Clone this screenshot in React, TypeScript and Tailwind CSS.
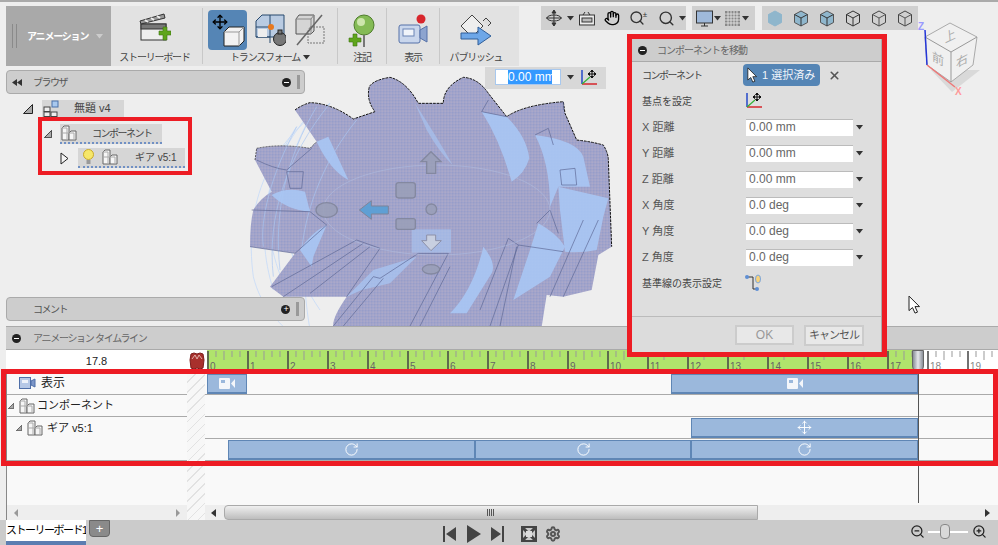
import { Hand, Settings, X, ZoomIn, ZoomOut, Search, Move, RotateCw } from 'lucide-react'

const Caret = ({ className = '' }: { className?: string }) => (
    <svg width="7" height="5" viewBox="0 0 7 5" className={className}><path d="M0 0h7L3.500 4.500z" fill="#333" /></svg>
)

const Tri = ({ size = 10 }: { size?: number }) => (
    <svg width={size} height={size} viewBox="0 0 10 10"><path d="M9.500 0.500V9.500H0.500z" fill="#aaa" stroke="#222" /></svg>
)

const Arrow = ({ className = '', size = 13 }: { className?: string; size?: number }) => (
    <svg width={size} height={size * 1.600} viewBox="0 0 12 19" className={className}>
        <path d="M1 1v14.500l3.500-3 2.500 5.500 2.500-1-2.500-5.500H11.500z" fill="#fff" stroke="#222" strokeWidth="1" />
    </svg>
)

const CompIcon = ({ size = 18 }: { size?: number }) => (
    <svg width={size} height={size} viewBox="0 0 18 18">
        <path d="M2 16V4l2-2h5v14z" fill="#f6f6f6" stroke="#666" />
        <path d="M9 16V9l2-2h5v9z" fill="#f6f6f6" stroke="#666" />
        <path d="M2 9h7M2 4h5v12M9 9h5v7" fill="none" stroke="#aaa" />
    </svg>
)

const AxisIcon = () => (
    <svg width="18" height="18" viewBox="0 0 18 18">
        <path d="M2 1v14" stroke="#2449c9" strokeWidth="1.500" />
        <path d="M2 15h15" stroke="#d6262c" strokeWidth="1.500" />
        <path d="M2 15l8-7" stroke="#35b035" strokeWidth="1.200" />
        <path d="M12 1v8M8 5h8M12 1l-1.500 1.500h3zM12 9l-1.500-1.500h3zM8 5l1.500-1.500v3zM16 5l-1.500-1.500v3z" stroke="#111" fill="#111" />
    </svg>
)

const Cube = ({ fill, top, side }: { fill: string; top: string; side: string }) => (
    <svg width="16" height="17" viewBox="0 0 16 17">
        <path d="M8 1l6.500 3.500v8L8 16l-6.500-3.500v-8z" fill={fill} stroke={side} />
        <path d="M1.500 4.500L8 8l6.500-3.500M8 8v8" fill="none" stroke={top} />
    </svg>
)

const Clapper = () => (
    <svg width="32" height="30" viewBox="0 0 32 30">
        <rect x="2" y="11" width="25" height="16" fill="#eee" stroke="#333" />
        <rect x="2" y="11" width="25" height="5" fill="#777" stroke="#333" />
        <path d="M1 8L25 1l1 4L2 11z" fill="#999" stroke="#333" />
        <path d="M6 7l3 2M12 5l3 2M18 3l3 2" stroke="#eee" strokeWidth="2" />
        <path d="M20 18h4v-4h4v4h4v4h-4v5h-4v-5h-4z" fill="#5fa51c" stroke="#3c7410" strokeWidth="0.600" />
    </svg>
)

const MoveTool = () => (
    <div className="w-[39px] h-[40px] bg-[#5585b5] rounded-sm relative">
        <Move size={16} strokeWidth={2} className="absolute left-[4px] top-[4px] text-black" />
        <svg width="22" height="22" viewBox="0 0 22 22" className="absolute left-[15px] top-[15px]">
            <path d="M1 7l5-5h15v14l-5 5H1z" fill="#f2f2f2" stroke="#222" />
            <path d="M1 7h15v14M16 7l5-5" fill="none" stroke="#999" />
        </svg>
    </div>
)

const AlignTool = () => (
    <svg width="31" height="34" viewBox="0 0 31 34">
        <path d="M1 8l6-6h22v22H1z" fill="#b9cbe2" stroke="#27496d" />
        <path d="M1 14h14V2M15 14v16M1 24h14" fill="none" stroke="#27496d" />
        <rect x="3" y="16" width="9" height="8" fill="#eee" />
        <circle cx="16" cy="14" r="3" fill="#e8791f" />
        <circle cx="25" cy="26" r="6.500" fill="#777" stroke="#222" />
        <rect x="23" y="17" width="4" height="4" fill="#777" stroke="#222" />
    </svg>
)

const SplitTool = () => (
    <svg width="32" height="34" viewBox="0 0 32 34">
        <path d="M2 6l3-4h15v16l-3 3H2z" fill="#d5d5d5" stroke="#555" />
        <path d="M2 6h15v15M17 6l3-4" fill="none" stroke="#888" />
        <path d="M16 14h14v16H14V18z" fill="none" stroke="#777" strokeDasharray="2 1" />
        <path d="M3 32L28 2" stroke="#666" strokeWidth="1.500" />
    </svg>
)

const NoteTool = () => (
    <svg width="32" height="36" viewBox="0 0 32 36">
        <circle cx="18" cy="11" r="10" fill="#84bb55" stroke="#4f7d2c" />
        <circle cx="15" cy="8" r="4" fill="#cde6ac" />
        <path d="M18 21v12" stroke="#777" strokeWidth="2" />
        <path d="M3 24h4v-4h4v4h4v4h-4v4H7v-4H3z" fill="#5fa51c" stroke="#3c7410" strokeWidth="0.600" />
    </svg>
)

const CamTool = () => (
    <svg width="32" height="34" viewBox="0 0 32 34">
        <rect x="2" y="11" width="21" height="18" rx="2" fill="#c9d6ec" stroke="#5571a8" />
        <rect x="6" y="15" width="11" height="7" fill="#f0f4fa" stroke="#6b84b5" />
        <path d="M23 16l7-4v16l-7-4z" fill="#8da4cf" stroke="#5571a8" />
        <circle cx="24" cy="5" r="4.500" fill="#d8262c" />
    </svg>
)

const PublishTool = () => (
    <svg width="34" height="34" viewBox="0 0 34 34">
        <path d="M13 1l11 11-11 11L2 12z" fill="#eee" stroke="#444" />
        <path d="M24 7l3-3 5 5-3 3" fill="#ddd" stroke="#444" />
        <path d="M2 19h17v-6l13 9-13 9v-6H2z" fill="#6ea7e8" stroke="#315f99" />
    </svg>
)

const GEAR_TOP = 'M195 120Q215 105 240 98Q305 100 370 147L435 125Q408 90 418 50Q430 30 480 22Q530 35 565 100L640 100Q640 50 700 22Q745 25 775 70L830 140Q880 105 1000 95L1005 130L1040 210Q1085 215 1120 225Q1135 250 1135 270L1145 530'

const Gear = () => (
    <svg width="400" height="260" viewBox="0 0 1200 780" className="absolute left-[230px] top-[70px]">
        <defs>
            <pattern id="mesh" width="9" height="9" patternUnits="userSpaceOnUse">
                <rect width="9" height="9" fill="#a0a3cb" />
                <rect width="4" height="4" fill="#989dc8" />
                <rect x="4" y="4" width="5" height="5" fill="#aba8c9" />
            </pattern>
        </defs>
        <g fill="none" stroke="#c6dbf8" strokeWidth="2.500">
            <path d="M300 100C120 210 40 400 70 620C90 700 130 740 170 780" />
            <path d="M240 130C110 280 70 470 130 660" />
            <path d="M200 170C90 330 90 520 190 700" />
            <path d="M260 110C140 300 120 500 270 720" />
            <path d="M380 150C250 300 190 480 240 780" />
        </g>
        <path d={`${GEAR_TOP}L1105 555L1085 660L1000 680L950 675L935 770L310 770Q305 745 350 680L160 680L120 650L195 550L60 530Q60 460 70 420Q90 385 125 365L75 270L80 235Q150 220 240 235L260 215Z`} fill="url(#mesh)" />
        <path d={GEAR_TOP} fill="none" stroke="#111" strokeWidth="3" strokeDasharray="8 3" />
        <path d="M80 235Q150 220 240 235L260 215M75 270L80 235" fill="none" stroke="#222" strokeWidth="2" strokeDasharray="6 3" />
        <g fill="none" stroke="#a9c6f2" strokeWidth="2.500" opacity="0.8">
            <path d="M300 100C170 260 110 440 130 620" />
            <path d="M260 110C170 260 130 430 150 600" />
            <path d="M380 150C290 260 230 400 215 540" />
            <path d="M200 170C120 320 90 450 100 530" />
        </g>
        <g fill="#a8c6f4" fillOpacity="0.9">
            <path d="M555 100Q620 200 668 285Q630 250 590 180z" opacity="0.7" />
            <path d="M755 125L830 140Q890 200 898 265Q885 310 845 335Q810 210 755 125z" />
            <path d="M915 195Q1040 210 1060 260L1080 350L985 350L960 410Q960 280 915 195z" />
            <path d="M985 350L1135 385L1120 440L1100 540Q1050 550 1005 545L990 420z" />
            <path d="M260 215L295 200L355 330Q300 300 260 215z" />
            <path d="M125 375Q170 350 225 365L240 425Q170 420 125 375z" />
            <path d="M210 540Q240 490 290 465L250 560L245 590z" />
            <path d="M900 540L925 460Q980 490 1005 530L960 620L850 690z" />
            <path d="M350 680L430 600L560 560L480 640L395 660z" opacity="0.8" />
            <path d="M660 730Q730 660 760 530Q800 580 785 610L710 730z" />
        </g>
        <g fill="none" stroke="#5c6694" strokeWidth="2">
            <path d="M80 270Q130 295 170 300L245 235M170 305L220 305L215 355L180 355z" />
            <path d="M915 195L955 175L970 225M1000 120L1000 95M830 140L755 125L775 90" />
            <path d="M60 530L195 550L290 465L240 425L65 420" />
            <path d="M125 650L380 510L450 535L350 680M160 680L400 520M240 670L420 530" />
            <path d="M310 768L430 620L450 625L565 550L655 550L540 768M340 768L460 625M570 768L660 590" />
            <path d="M750 720L835 505L865 525L780 768M810 768L860 530M920 460L960 420L985 490M865 525L1000 545" />
            <path d="M990 300L1035 295L1040 345L995 345z" />
            <path d="M1000 680L1105 450M960 680L1060 450" />
        </g>
        <ellipse cx="620" cy="420" rx="340" ry="135" fill="none" stroke="#b4c2e6" strokeWidth="2" opacity="0.7" />
        <rect x="545" y="478" width="118" height="70" fill="#a8c6f4" opacity="0.6" />
        <g fill="#9a9fb8" stroke="#7f8499" strokeWidth="4" opacity="0.85">
            <path d="M603 245L633 275H617V310H590V275H573z" />
            <rect x="498" y="338" width="58" height="46" rx="8" />
            <rect x="498" y="446" width="58" height="32" rx="6" />
            <circle cx="604" cy="418" r="16" />
            <ellipse cx="290" cy="420" rx="32" ry="22" />
            <ellipse cx="603" cy="598" rx="26" ry="14" />
        </g>
        <path d="M603 542L575 512H590V495H617V512H634z" fill="#c8cfe0" stroke="#8c90a8" strokeWidth="3" />
        <path d="M388 420L424 392V408H475V432H424V448z" fill="#5f9fd4" stroke="#7f8499" strokeWidth="3" />
    </svg>
)

const ViewCube = () => (
    <svg width="72" height="80" viewBox="918 18 72 80" className="absolute left-[918px] top-[18px]">
        <path d="M931 70L952 92L980 70z" fill="#ccc" opacity="0.6" />
        <path d="M925 37L950 23L977 37L973 65L951 82L927 65z" fill="#f0f0f0" stroke="#aaa" />
        <path d="M925 37L951 52L977 37M951 52V82" fill="none" stroke="#999" />
        <text transform="translate(945 43) rotate(-25) skewX(-20)" fontSize="12" fill="#aaa" fontFamily="Noto Sans CJK JP, sans-serif">上</text>
        <text transform="translate(932 60) skewY(28)" fontSize="12" fill="#aaa" fontFamily="Noto Sans CJK JP, sans-serif">前</text>
        <text transform="translate(956 68) skewY(-28)" fontSize="12" fill="#aaa" fontFamily="Noto Sans CJK JP, sans-serif">右</text>
        <path d="M925 30L927 65" stroke="#2436d8" strokeWidth="1.500" />
        <path d="M927 65L955 87" stroke="#e77" strokeWidth="1.500" />
        <text x="918" y="30" fontSize="10" fontWeight="700" fill="#99f" fontFamily="Liberation Sans, sans-serif">Z</text>
        <text x="955" y="95" fontSize="10" fontWeight="700" fill="#f99" fontFamily="Liberation Sans, sans-serif">X</text>
    </svg>
)

const Ruler = () => {
    const ticks = []
    for (let x = 1; x < 791; x += 8) ticks.push(x)
    return (
        <svg width="791" height="22" viewBox="0 0 791 22" className="block">
            <rect width="791" height="22" fill="#fff" />
            <rect width="711" height="22" fill="#b0e46c" />
            {ticks.map((x, i) => (
                <line key={x} x1={x} x2={x} y1="1" y2={i % 5 === 0 ? 21 : i % 5 === 2 ? 10 : 7} stroke={i % 5 === 0 ? '#444' : '#999'} strokeWidth={i % 5 === 0 ? 1.500 : 1} />
            ))}
            {Array.from({ length: 20 }, (_, i) => (
                <text key={i} x={1 + i * 40 + 2} y="20" fontSize="10" fill={i > 17 ? '#888' : '#666'} fontFamily="Liberation Sans, sans-serif">{i}</text>
            ))}
        </svg>
    )
}

const Bar = ({ ml, w, children }: { ml: string; w: string; children?: React.ReactNode }) => (
    <div className={`${ml} ${w} h-[20px] bg-[#9bb8dc] border border-[#5f86b5] border-b-2 flex items-center justify-center`}>{children}</div>
)

const CamMini = () => (
    <svg width="16" height="11" viewBox="0 0 16 11"><rect width="11" height="11" rx="1" fill="#f4f6fa" /><rect x="2" y="2" width="4" height="3" fill="#9bb8dc" /><path d="M12 5.500L16 1V10z" fill="#f4f6fa" /></svg>
)

const Field = ({ label, value }: { label: string; value: string }) => (
    <div className="h-[26px] flex items-center">
        <span className="w-[104px] text-[11px] text-[#555]">{label}</span>
        <div className="w-[107px] h-[17px] bg-white border-t border-[#bbb] pl-[3px] text-[12px] leading-[15px] text-[#666]">{value}</div>
        <Caret className="ml-[3px]" />
    </div>
)

const BUTTONS = [
    { label: '注記', w: 'w-[49px]', icon: <NoteTool /> },
    { label: '表示', w: 'w-[53px]', icon: <CamTool /> },
    { label: 'パブリッシュ', w: 'w-[72px]', icon: <PublishTool /> },
]

function App() {
    return (
        <div className="relative w-[998px] h-[545px] overflow-hidden flex flex-col bg-[#eeeeee] [font-family:'Liberation_Sans','Noto_Sans_CJK_JP',sans-serif]">
            <div className="relative h-[326px] flex flex-col pt-[6px] pl-[6px]">
                <div className="absolute left-0 top-0 w-full h-[2px] bg-[#aaaaaa]" />
                <Gear />
                <ViewCube />

                {/* ribbon */}
                <div className="relative w-[513px] h-[60px] flex bg-[#e2e2e2] text-[10px] text-[#444] tracking-[-1.200px]">
                    <div className="w-[105px] h-full bg-[#a9a9a9] flex items-center pl-[6px]">
                        <div className="w-[5px] h-[24px] border-x border-[#8a8a8a]" />
                        <span className="ml-[10px] text-white font-bold">アニメーション</span>
                        <Caret className="ml-[8px] invert" />
                    </div>
                    <div className="w-[92px] flex flex-col items-center border-r border-[#c8c8c8] my-[2px] pt-[5px] pr-[4px]">
                        <Clapper />
                        <span className="mt-auto -mb-[1px] whitespace-nowrap">ストーリーボード</span>
                    </div>
                    <div className="w-[135px] flex flex-col border-r border-[#c8c8c8] my-[2px] px-[5px] pt-[2px]">
                        <div className="flex items-center gap-[8px]">
                            <MoveTool />
                            <AlignTool />
                            <SplitTool />
                        </div>
                        <div className="mt-auto -mb-[1px] flex items-center justify-center gap-[3px]">
                            <span>トランスフォーム</span>
                            <Caret />
                        </div>
                    </div>
                    {BUTTONS.map((b) => (
                        <div key={b.label} className={`${b.w} flex flex-col items-center border-r border-[#c8c8c8] last:border-r-0 my-[2px] pt-[6px]`}>
                            {b.icon}
                            <span className="mt-auto -mb-[1px] whitespace-nowrap">{b.label}</span>
                        </div>
                    ))}
                </div>

                {/* browser */}
                <div className="relative mt-[4px] w-[299px] h-[24px] flex items-center bg-[#cdcdcd] border border-[#aaaaaa] rounded-sm px-[4px] text-[10px] text-[#555] tracking-[-1.500px]">
                    <svg width="10" height="7" viewBox="0 0 10 7" className="ml-[1px]"><path d="M5 0v7L0 3.500zM10 0v7L5 3.500z" fill="#333" /></svg>
                    <span className="ml-[11px]">ブラウザ</span>
                    <div className="ml-auto w-[9px] h-[9px] rounded-full bg-[#222] flex items-center justify-center">
                        <div className="w-[5px] h-[1px] bg-white" />
                    </div>
                    <div className="ml-[6px] w-[3px] h-[14px] bg-[#999]" />
                </div>
                <div className="relative mt-[6px] flex flex-col text-[11px] text-[#444]">
                    <div className="h-[17px] ml-[17px] flex items-center">
                        <Tri />
                        <div className="ml-[9px] w-[82px] h-[17px] bg-[#d6d6d6] flex items-center">
                            <svg width="18" height="17" viewBox="0 0 18 17">
                                <rect x="2" y="7" width="6" height="4.500" fill="#eee" stroke="#444" />
                                <rect x="2" y="12" width="6" height="4.500" fill="#eee" stroke="#444" />
                                <rect x="9" y="12" width="6" height="4.500" fill="#eee" stroke="#444" />
                                <rect x="10" y="1" width="6" height="6" fill="#a8c8ee" stroke="#4a70a8" />
                            </svg>
                            <span className="ml-[14px]">無題 v4</span>
                        </div>
                    </div>
                    <div className="mt-[7px] h-[20px] ml-[38px] flex items-center">
                        <Tri size={8} />
                        <div className="ml-[8px] w-[102px] h-[20px] bg-[#d6d6d6] flex items-center border-b-2 border-dotted border-[#7090c4]">
                            <CompIcon />
                            <span className="ml-[14px] text-[10px] tracking-[-1.500px]">コンポーネント</span>
                        </div>
                    </div>
                    <div className="mt-[4px] h-[20px] ml-[54px] flex items-center">
                        <svg width="9" height="13" viewBox="0 0 9 13"><path d="M1 1L8 6.500L1 12z" fill="#f4f4f4" stroke="#222" /></svg>
                        <div className="ml-[9px] w-[107px] h-[20px] bg-[#d6d6d6] flex items-center border-b-2 border-dotted border-[#7090c4]">
                            <svg width="11" height="16" viewBox="0 0 11 16" className="ml-[5px]">
                                <circle cx="5.500" cy="5.500" r="5" fill="#f6e76a" stroke="#c8a92a" />
                                <rect x="3.500" y="11" width="4" height="4" fill="#999" />
                            </svg>
                            <div className="ml-[7px]"><CompIcon /></div>
                            <span className="ml-[16px] text-[10px]">ギア v5:1</span>
                        </div>
                    </div>
                </div>

                {/* comments */}
                <div className="relative mt-auto mb-[5px] w-[299px] h-[24px] flex items-center bg-[#cdcdcd] border border-[#aaaaaa] rounded-sm pl-[26px] pr-[5px] text-[10px] text-[#555] tracking-[-1.500px]">
                    <span>コメント</span>
                    <div className="ml-auto w-[9px] h-[9px] rounded-full bg-[#222] flex items-center justify-center text-[9px] leading-none text-white">+</div>
                    <div className="ml-[6px] w-[3px] h-[14px] bg-[#999]" />
                </div>
            </div>

            {/* timeline */}
            <div className="relative h-[24px] ml-[6px] flex items-center bg-[#cdcdcd] border-y border-[#aaaaaa] pl-[6px] text-[10px] text-[#666] tracking-[-1.300px]">
                <div className="w-[9px] h-[9px] rounded-full bg-[#222] flex items-center justify-center">
                    <div className="w-[5px] h-[1px] bg-white" />
                </div>
                <span className="ml-[12px]">アニメーション タイムライン</span>
            </div>
            <div className="ml-[6px] h-[22px] flex bg-white">
                <div className="w-[181px] flex items-center justify-center text-[11px] text-[#222]">17.8</div>
                <div className="w-[20px] flex items-center justify-center">
                    <svg width="16" height="18" viewBox="0 0 16 18">
                        <path d="M2 2l3-1 3 1 3-1 3 1 1 6-1 8-3 1-3-1-3 1-3-1-1-8z" fill="#a8302c" stroke="#7c1d1a" />
                        <path d="M3 7l3-4 2 4 2-4 3 4" fill="none" stroke="#e0b0a8" />
                    </svg>
                </div>
                <Ruler />
            </div>
            <div className="h-[148px] ml-[6px] flex bg-[#f9f9f9] border-l border-[#888888]">
                <div className="w-[180px] flex flex-col text-[11px] text-[#222]">
                    <div className="h-[23px] flex items-center pl-[12px] border-b border-[#aaaaaa]">
                        <svg width="17" height="12" viewBox="0 0 17 12">
                            <rect x="0.500" y="0.500" width="11" height="11" fill="#b6c8e6" stroke="#4f6fa8" />
                            <rect x="3" y="3" width="6" height="3" fill="#eef2f9" />
                            <path d="M12 4l4-2v8l-4-2z" fill="#7c96c8" stroke="#4f6fa8" />
                        </svg>
                        <span className="ml-[5px] text-[12px]">表示</span>
                    </div>
                    <div className="h-[22px] flex items-center pl-[1px] border-b border-[#aaaaaa]">
                        <Tri size={6} />
                        <div className="ml-[4px]"><CompIcon /></div>
                        <span className="ml-[1px]">コンポーネント</span>
                    </div>
                    <div className="h-[44px] pt-[2px] pl-[9px] flex items-start border-b border-[#aaaaaa]">
                        <div className="mt-[6px]"><Tri size={6} /></div>
                        <div className="ml-[4px]"><CompIcon /></div>
                        <span className="ml-[3px] mt-[1px]">ギア v5:1</span>
                    </div>
                    <div className="mt-auto h-[15px] px-[7px] flex items-center justify-between bg-[#eeeeee]">
                        <svg width="4" height="8" viewBox="0 0 4 8"><path d="M4 0v8L0 4z" fill="#999" /></svg>
                        <svg width="4" height="8" viewBox="0 0 4 8"><path d="M0 0v8l4-4z" fill="#999" /></svg>
                    </div>
                </div>
                <div className="w-[18px] bg-[repeating-linear-gradient(135deg,#e2e2e2_0,#e2e2e2_1px,#f7f7f7_1px,#f7f7f7_7px)]" />
                <div className="relative flex-1 flex flex-col">
                    <div className="h-[23px] pt-[2px] flex border-b border-[#aaaaaa]">
                        <Bar ml="ml-[2px]" w="w-[40px]"><CamMini /></Bar>
                        <Bar ml="ml-[424px]" w="w-[247px]"><CamMini /></Bar>
                    </div>
                    <div className="h-[22px] border-b border-[#aaaaaa]" />
                    <div className="h-[22px] pt-[1px] flex border-b border-[#aaaaaa]">
                        <Bar ml="ml-[486px]" w="w-[227px]"><Move size={15} strokeWidth={1.500} className="text-white" /></Bar>
                    </div>
                    <div className="h-[22px] pt-[1px] flex border-b border-[#aaaaaa]">
                        <Bar ml="ml-[23px]" w="w-[247px]"><RotateCw size={15} strokeWidth={1.500} className="text-white" /></Bar>
                        <Bar ml="ml-0" w="w-[216px]"><RotateCw size={15} strokeWidth={1.500} className="text-white" /></Bar>
                        <Bar ml="ml-0" w="w-[227px]"><RotateCw size={15} strokeWidth={1.500} className="text-white" /></Bar>
                    </div>
                    <div className="absolute left-[713px] top-0 w-px h-[131px] bg-[#555]" />
                    <div className="mt-auto h-[15px] flex items-center bg-[#eeeeee]">
                        <svg width="5" height="8" viewBox="0 0 5 8" className="ml-[6px]"><path d="M5 0v8L0 4z" fill="#333" /></svg>
                        <div className="ml-[8px] w-[534px] h-[15px] bg-gradient-to-b from-[#f0f0f0] to-[#bdbdbd] border border-[#aaaaaa] rounded-l-sm flex items-center pl-[262px]">
                            <div className="w-[7px] h-[7px] bg-[repeating-linear-gradient(90deg,#555_0,#555_1px,transparent_1px,transparent_2px)]" />
                        </div>
                        <svg width="5" height="8" viewBox="0 0 5 8" className="ml-auto mr-[8px]"><path d="M0 0v8l5-4z" fill="#333" /></svg>
                    </div>
                </div>
            </div>

            {/* bottom bar */}
            <div className="flex-1 flex items-start bg-[#cbcbcb] pl-[6px]">
                <div className="w-[80px] h-[25px] bg-white border-b-[4px] border-[#5b7db1] text-[11px] leading-[20px] text-black whitespace-nowrap overflow-hidden tracking-[-1.500px]">ストーリーボード1</div>
                <div className="ml-[3px] w-[21px] h-[17px] bg-[#8a8a8a] border border-[#666666] rounded-b-sm flex items-center justify-center text-[13px] leading-none text-white">+</div>
                <div className="ml-[333px] mt-[5px] flex items-center text-[#555]">
                    <svg width="13" height="16" viewBox="0 0 13 16" fill="#444"><rect width="2" height="16" /><path d="M13 1v14L3 8z" /></svg>
                    <svg width="14" height="18" viewBox="0 0 14 18" fill="#444" className="ml-[11px]"><path d="M0 0l14 9-14 9z" /></svg>
                    <svg width="13" height="16" viewBox="0 0 13 16" fill="#444" className="ml-[10px]"><rect x="11" width="2" height="16" /><path d="M0 1v14l10-7z" /></svg>
                    <svg width="16" height="16" viewBox="0 0 16 16" className="ml-[17px]"><rect x="1" y="1" width="14" height="14" fill="none" stroke="#444" strokeWidth="2" /><path d="M1 1l14 14M15 1L1 15" stroke="#444" strokeWidth="3" /><rect x="5" y="5" width="6" height="6" fill="#ddd" /></svg>
                    <Settings size={16} strokeWidth={3} className="ml-[8px] text-[#555]" />
                </div>
                <div className="ml-auto mr-[11px] mt-[4px] flex items-center">
                    <ZoomOut size={15} strokeWidth={2} className="text-[#222]" />
                    <div className="relative ml-[3px] w-[40px] h-[2px] bg-white">
                        <div className="absolute left-[12px] -top-[7px] w-[10px] h-[15px] bg-[#d9d9d9] border border-[#888888] rounded-sm" />
                    </div>
                    <ZoomIn size={15} strokeWidth={2} className="ml-[4px] text-[#222]" />
                </div>
            </div>

            {/* view toolbars */}
            <div className="absolute left-[541px] top-[6px] w-[145px] h-[24px] bg-[#d0d0d0] flex items-center pl-[4px] text-[#333]">
                <svg width="18" height="18" viewBox="0 0 18 18" fill="none" stroke="#333"><path d="M9 1v16M1 9h16" /><ellipse cx="9" cy="9" rx="7" ry="3" /><path d="M9 1L7 4h4zM9 17l-2-3h4z" fill="#333" /></svg>
                <Caret className="ml-[4px]" />
                <svg width="16" height="15" viewBox="0 0 16 15" className="ml-[5px]" fill="#eee" stroke="#333"><rect x="0.500" y="4" width="15" height="10" /><rect x="3" y="7" width="10" height="4" fill="#bbb" /><path d="M4 4l2-3M11 4l-2-3" /></svg>
                <Hand size={16} className="ml-[9px] text-black" />
                <Search size={16} strokeWidth={2} className="ml-[9px]" />
                <span className="text-[8px] leading-none -ml-[2px] -mt-[6px]">±</span>
                <Search size={17} strokeWidth={2} className="ml-[11px]" />
                <Caret className="ml-[4px]" />
            </div>
            <div className="absolute left-[692px] top-[6px] w-[63px] h-[24px] bg-[#d0d0d0] flex items-center pl-[4px]">
                <svg width="17" height="17" viewBox="0 0 17 17"><rect x="0.500" y="1" width="16" height="12" fill="#9fb9da" stroke="#333" /><path d="M5 16h7M8.500 13v3" stroke="#333" /></svg>
                <Caret className="ml-[1px]" />
                <svg width="15" height="15" viewBox="0 0 15 15" className="ml-[4px]"><rect width="15" height="15" fill="#888" /><path d="M3 0v15M6 0v15M9 0v15M12 0v15M0 3h15M0 6h15M0 9h15M0 12h15" stroke="#eee" strokeWidth="0.800" /></svg>
                <Caret className="ml-[2px]" />
            </div>
            <div className="absolute left-[762px] top-[6px] w-[156px] h-[24px] bg-[#d0d0d0] flex items-center gap-[10px] pl-[5px]">
                <Cube fill="#8fb6cc" top="#8fb6cc" side="#8fb6cc" />
                <Cube fill="#8fb6cc" top="#333" side="#555" />
                <Cube fill="#8fb6cc" top="#333" side="#555" />
                <Cube fill="none" top="#333" side="#333" />
                <Cube fill="none" top="#555" side="#444" />
                <Cube fill="none" top="#555" side="#444" />
            </div>

            {/* floating value */}
            <div className="absolute left-[485px] top-[67px] w-[121px] h-[22px] bg-[#d8d8d8] flex items-start pl-[10px] pt-[2px]">
                <div className="w-[66px] h-[16px] bg-white border border-[#a8c8ee] pl-[12px] text-[12px] leading-[14px] text-white overflow-hidden">
                    <span className="bg-[#3399ff] block w-[44px] whitespace-nowrap">0.00 mm</span>
                </div>
                <Caret className="ml-[6px] mt-[6px]" />
                <div className="ml-[6px]"><AxisIcon /></div>
            </div>

            {/* move palette */}
            <div className="absolute left-[632px] top-[39px] w-[250px] h-[314px] flex flex-col bg-[#dedede] border-r border-[#aaaaaa]">
                <div className="h-[23px] flex items-center bg-[#cdcdcd] border-b border-[#aaaaaa] pl-[6px] text-[10px] text-[#666] tracking-[-1px]">
                    <div className="w-[9px] h-[9px] rounded-full bg-[#222] flex items-center justify-center">
                        <div className="w-[5px] h-[1px] bg-white" />
                    </div>
                    <span className="ml-[10px]">コンポーネントを移動</span>
                </div>
                <div className="flex-1 flex flex-col pl-[10px]">
                    <div className="h-[26px] flex items-center">
                        <span className="w-[101px] text-[10px] text-[#444] tracking-[-1.500px]">コンポーネント</span>
                        <div className="w-[77px] h-[22px] bg-[#5585b5] rounded-sm flex items-center pl-[4px] text-[11px] text-[#f0f4fa]">
                            <Arrow size={10} />
                            <span className="ml-[5px]">1 選択済み</span>
                        </div>
                        <X size={13} strokeWidth={3} className="ml-[8px] text-[#555]" />
                    </div>
                    <div className="h-[26px] flex items-center">
                        <span className="w-[103px] text-[10px] text-[#444]">基点を設定</span>
                        <AxisIcon />
                    </div>
                    <Field label="X 距離" value="0.00 mm" />
                    <Field label="Y 距離" value="0.00 mm" />
                    <Field label="Z 距離" value="0.00 mm" />
                    <Field label="X 角度" value="0.0 deg" />
                    <Field label="Y 角度" value="0.0 deg" />
                    <Field label="Z 角度" value="0.0 deg" />
                    <div className="h-[26px] flex items-center">
                        <span className="w-[103px] text-[10px] text-[#444]">基準線の表示設定</span>
                        <svg width="16" height="18" viewBox="0 0 16 18" fill="none">
                            <path d="M2 3h6v12h4" stroke="#333" />
                            <circle cx="2" cy="3" r="2" fill="#5f8fd4" />
                            <circle cx="12" cy="15" r="2" fill="#5f8fd4" />
                            <ellipse cx="13" cy="5" rx="2.500" ry="4" fill="#f9d27a" stroke="#7aa6dd" />
                        </svg>
                    </div>
                </div>
                <div className="h-[37px] flex items-center justify-end gap-[10px] pr-[17px] border-t border-[#bbbbbb] bg-[#dcdcdc]">
                    <div className="w-[59px] h-[20px] bg-[#e8e8e8] border-2 border-[#cccccc] flex items-center justify-center text-[12px] text-[#999]">OK</div>
                    <div className="w-[60px] h-[21px] bg-[#e8e8e8] border-2 border-[#cccccc] flex items-center justify-center text-[11px] text-[#555] tracking-[-1px]">キャンセル</div>
                </div>
            </div>

            {/* playhead and mouse */}
            <div className="absolute left-[912px] top-[350px] w-[12px] h-[22px] bg-gradient-to-r from-[#8a8f98] via-[#e6e8ec] to-[#8a8f98] rounded-b-[6px] border border-[#666666]" />
            <Arrow size={12} className="absolute left-[908px] top-[295px]" />

            {/* red callouts */}
            <div className="absolute left-[38px] top-[117px] w-[154px] h-[58px] border-[4px] border-[#ed1c24]" />
            <div className="absolute left-[627px] top-[34px] w-[260px] h-[323px] border-[5px] border-[#ed1c24]" />
            <div className="absolute left-[1px] top-[369px] w-[997px] h-[97px] border-[5px] border-[#ed1c24]" />
        </div>
    )
}

export default App
